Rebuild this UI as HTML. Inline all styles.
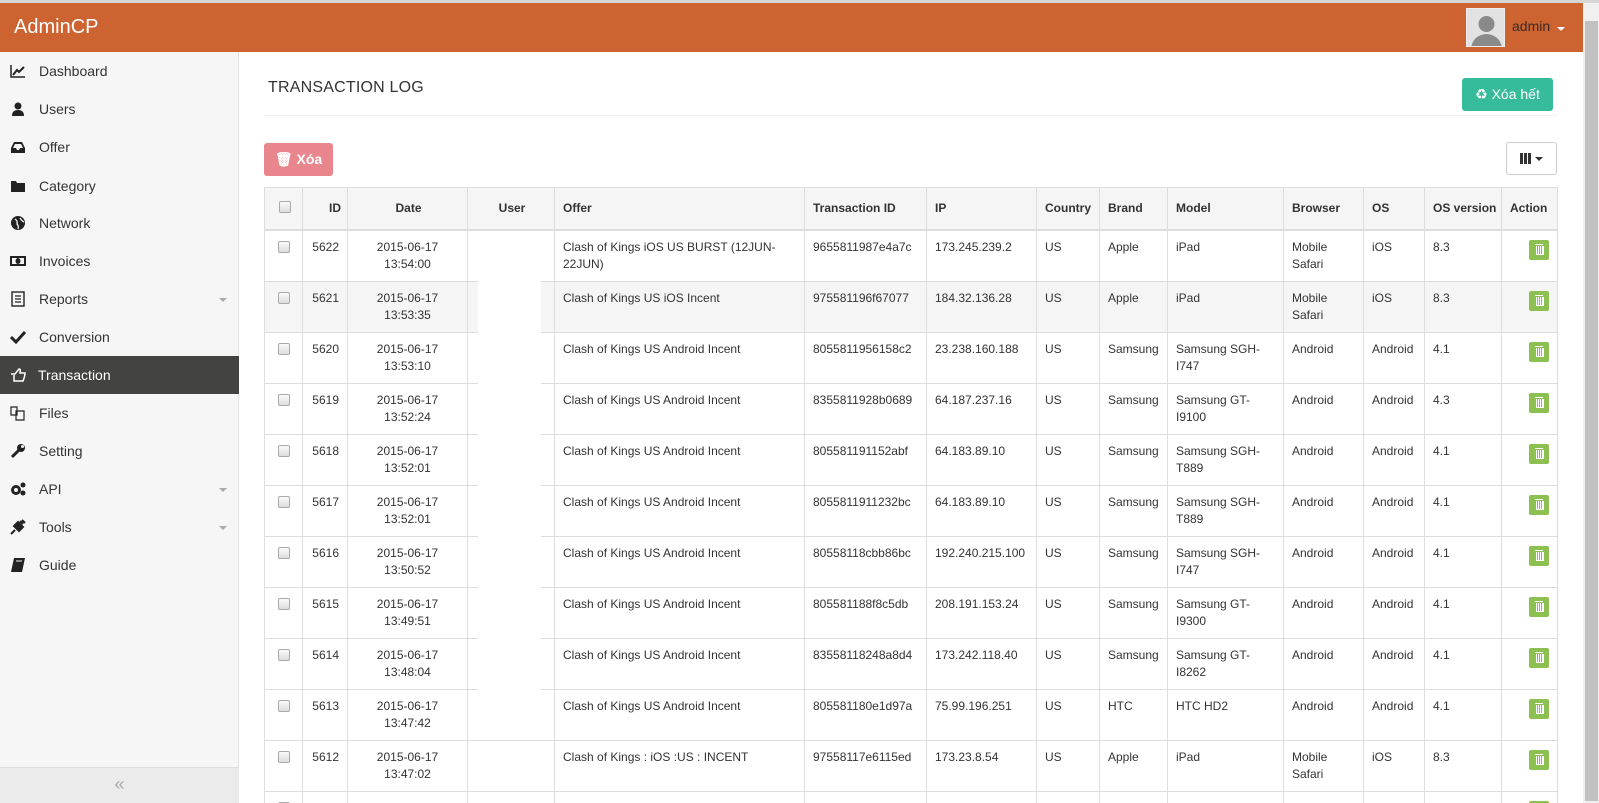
<!DOCTYPE html>
<html style="overflow:hidden"><head><meta charset="utf-8">
<style>
*{box-sizing:border-box;margin:0;padding:0}
body{width:1599px;height:803px;overflow:hidden;background:#fff;font-family:"Liberation Sans",Arial,sans-serif;color:#333;position:relative}
#chrome{position:absolute;left:0;top:0;width:1599px;height:3px;background:#d6d6d6}
#hdr{position:absolute;left:0;top:3px;width:1583px;height:49px;background:#cd6331}
#hdr .brand{position:absolute;left:14px;top:13px;color:#fff;font-size:20px}
#hdr .av{position:absolute;left:1466px;top:5px;width:39px;height:39px;background:#d9d9d9;border:1px solid #eee;overflow:hidden}
#hdr .user{position:absolute;left:1512px;top:15px;font-size:14px;color:#3a2a20}
#hdr .caret{position:absolute;left:1557px;top:24px;border-left:4px solid transparent;border-right:4px solid transparent;border-top:4px solid #fff}
#scroll{position:absolute;left:1583px;top:3px;width:16px;height:800px;background:#f0f0f0}
#scroll .th{position:absolute;left:2px;top:18px;width:13px;height:780px;background:#c1c1c1}
#side{position:absolute;left:0;top:52px;width:239px;height:751px;background:#f6f6f6;border-right:1px solid #e3e3e3}
.it{position:absolute;left:0;width:239px;height:38px;font-size:14px;line-height:38px;color:#333}
.it .ic{position:absolute;left:10px;top:11px;width:16px;height:16px}
.it span.t{position:absolute;left:39px}
.it .dd{position:absolute;left:219px;top:18px;border-left:4px solid transparent;border-right:4px solid transparent;border-top:4px solid #aaa}
.it.act{background:#434341;color:#fff}
#coll{position:absolute;left:0;top:715px;width:239px;height:36px;background:#ebebeb;border-top:1px solid #ddd;text-align:center;color:#aaa;font-size:18px;line-height:32px}
#title{position:absolute;left:268px;top:79px;font-size:16px;color:#333;letter-spacing:.2px}
#hr{position:absolute;left:264px;top:115px;width:1293px;height:1px;background:#eee}
.btn{position:absolute;border-radius:3px;color:#fff;font-size:14px;text-align:center}
#xh{left:1462px;top:78px;width:91px;height:33px;background:#37bc9b;line-height:33px}
#xo{left:264px;top:143px;width:69px;height:33px;background:#e9858d;line-height:33px;font-weight:bold}
#cb{left:1506px;top:142px;width:51px;height:33px;border:1px solid #ccc;background:#fff}
table{position:absolute;left:264px;top:187px;border-collapse:collapse;table-layout:fixed;width:1293px;font-size:12px}
td,th{border:1px solid #ddd;padding:8px 8px;vertical-align:top;line-height:17px;color:#333;overflow:hidden}
th{background:#f5f5f5;height:42px;vertical-align:middle;text-align:left;border-bottom:2px solid #ddd;padding:8px 6px 8px 8px;white-space:nowrap}
td{height:51px}
.c{text-align:center}.r{text-align:right}
.ck{display:inline-block;width:12px;height:12px;border:1px solid #aaa;border-radius:2px;background:linear-gradient(#fafafa,#ddd);margin-top:2px}
tr.hv td{background:#f5f5f5}
.del{display:inline-block;width:20px;height:20px;background:#8cc152;border-radius:2px;position:relative;margin-top:1px}
.del:before{content:"";position:absolute;left:7px;top:6px;width:6px;height:8px;border:1px solid #fff;border-top:none;background:repeating-linear-gradient(90deg,transparent 0 1px,#fff 1px 2px)}
.del:after{content:"";position:absolute;left:6px;top:4px;width:8px;height:1px;background:#fff}
#mask{position:absolute;left:478px;top:281px;width:63px;height:458px;background:#fff}
</style></head><body>
<div id="chrome"></div>
<div id="hdr"><div class="brand">AdminCP</div>
<div class="av"><svg width="39" height="39"><rect width="39" height="39" fill="#e2e2e2"/><circle cx="19.5" cy="15" r="8" fill="#8a8a8a"/><path d="M4 39 Q6 26 19.5 25 Q33 26 35 39Z" fill="#8a8a8a"/></svg></div>
<div class="user">admin</div><div class="caret"></div></div>
<div id="scroll"><div class="th"></div></div>
<div id="side">
<div class="it" style="top:0"><svg class="ic" viewBox="0 0 16 16"><path d="M1 2V14H15" stroke="#222" fill="none" stroke-width="1.5"/><path d="M3 12L7 7L9 9L14 4" stroke="#222" fill="none" stroke-width="2"/></svg><span class="t">Dashboard</span></div>
<div class="it" style="top:38px"><svg class="ic" viewBox="0 0 16 16"><circle cx="8" cy="5" r="3.5" fill="#222"/><path d="M2 15Q2 9 8 9Q14 9 14 15Z" fill="#222"/></svg><span class="t">Users</span></div>
<div class="it" style="top:76px"><svg class="ic" viewBox="0 0 16 16"><path d="M1 9L4 3H12L15 9V14H1Z" fill="#222"/><path d="M3 9H6L7 11H9L10 9H13L11 5H5Z" fill="#f6f6f6"/></svg><span class="t">Offer</span></div>
<div class="it" style="top:115px"><svg class="ic" viewBox="0 0 16 16"><path d="M1 3H6L7 5H15V14H1Z" fill="#222"/></svg><span class="t">Category</span></div>
<div class="it" style="top:152px"><svg class="ic" viewBox="0 0 16 16"><circle cx="8" cy="8" r="7" fill="#222"/><path d="M5 4Q8 6 7 9Q9 11 8 14M10 3Q12 6 14 7" stroke="#f6f6f6" fill="none" stroke-width="1.3"/></svg><span class="t">Network</span></div>
<div class="it" style="top:190px"><svg class="ic" viewBox="0 0 16 16"><rect x="0" y="3" width="16" height="10" fill="#222"/><rect x="2" y="5" width="12" height="6" fill="#f6f6f6"/><ellipse cx="8" cy="8" rx="2.5" ry="3" fill="#222"/></svg><span class="t">Invoices</span></div>
<div class="it" style="top:228px"><svg class="ic" viewBox="0 0 16 16"><rect x="2" y="1" width="12" height="14" fill="none" stroke="#222" stroke-width="1.4"/><path d="M5 5H11M5 8H11M5 11H11" stroke="#222" stroke-width="1.2"/></svg><span class="t">Reports</span><i class="dd"></i></div>
<div class="it" style="top:266px"><svg class="ic" viewBox="0 0 16 16"><path d="M1 8L6 13L15 3" stroke="#222" fill="none" stroke-width="3"/></svg><span class="t">Conversion</span></div>
<div class="it act" style="top:304px"><svg class="ic" viewBox="0 0 16 16"><path d="M1 7H5L9 2Q11 2 10 6H15Q15 9 13 14H4V8" stroke="#fff" fill="none" stroke-width="1.5"/></svg><span class="t" style="left:38px">Transaction</span></div>
<div class="it" style="top:342px"><svg class="ic" viewBox="0 0 16 16"><path d="M1 2H7V10H1Z M6 6H14V15H6Z" stroke="#222" fill="none" stroke-width="1.2"/></svg><span class="t">Files</span></div>
<div class="it" style="top:380px"><svg class="ic" viewBox="0 0 16 16"><path d="M2 14L9 7" stroke="#222" stroke-width="3"/><circle cx="11" cy="5" r="4" fill="#222"/><circle cx="12.5" cy="3.5" r="1.5" fill="#f6f6f6"/></svg><span class="t">Setting</span></div>
<div class="it" style="top:418px"><svg class="ic" viewBox="0 0 16 16"><circle cx="6" cy="9" r="5" fill="#222"/><circle cx="6" cy="9" r="2" fill="#f6f6f6"/><circle cx="13" cy="4" r="2.5" fill="#222"/><circle cx="13" cy="12" r="2.5" fill="#222"/></svg><span class="t">API</span><i class="dd"></i></div>
<div class="it" style="top:456px"><svg class="ic" viewBox="0 0 16 16"><path d="M1 15L5 11M4 7L9 12L13 8L8 3Z M10 2L13 5M12 1L15 4" stroke="#222" fill="#222" stroke-width="2"/></svg><span class="t">Tools</span><i class="dd"></i></div>
<div class="it" style="top:494px"><svg class="ic" viewBox="0 0 16 16"><path d="M4 1H15L12 15H1Z" fill="#222"/><path d="M6 4H12" stroke="#f6f6f6"/></svg><span class="t">Guide</span></div>
<div id="coll">«</div>
</div>
<div id="title">TRANSACTION LOG</div>
<div id="hr"></div>
<div class="btn" id="xh">♻ Xóa hết</div>
<div class="btn" id="xo">🗑 Xóa</div>
<div class="btn" id="cb"><svg width="51" height="31" style="position:absolute;left:0;top:0"><rect x="13" y="10" width="3" height="11" fill="#333"/><rect x="17" y="10" width="3" height="11" fill="#333"/><rect x="21" y="10" width="3" height="11" fill="#333"/><path d="M28 14L36 14L32 18Z" fill="#333"/></svg></div>
<table>
<colgroup><col style="width:38px"><col style="width:45px"><col style="width:120px"><col style="width:87px"><col style="width:250px"><col style="width:122px"><col style="width:110px"><col style="width:63px"><col style="width:68px"><col style="width:116px"><col style="width:80px"><col style="width:61px"><col style="width:77px"><col style="width:56px"></colgroup>
<tr><th class="c"><span class="ck"></span></th><th class="r">ID</th><th class="c">Date</th><th class="c">User</th><th>Offer</th><th>Transaction ID</th><th>IP</th><th>Country</th><th>Brand</th><th>Model</th><th>Browser</th><th>OS</th><th>OS version</th><th>Action</th></tr>
<tr><td class="c"><span class="ck"></span></td><td class="r">5622</td><td class="c">2015-06-17<br>13:54:00</td><td></td><td>Clash of Kings iOS US BURST (12JUN-22JUN)</td><td>9655811987e4a7c</td><td>173.245.239.2</td><td>US</td><td>Apple</td><td>iPad</td><td>Mobile Safari</td><td>iOS</td><td>8.3</td><td class="r"><span class="del"></span></td></tr>
<tr class="hv"><td class="c"><span class="ck"></span></td><td class="r">5621</td><td class="c">2015-06-17<br>13:53:35</td><td></td><td>Clash of Kings US iOS Incent</td><td>975581196f67077</td><td>184.32.136.28</td><td>US</td><td>Apple</td><td>iPad</td><td>Mobile Safari</td><td>iOS</td><td>8.3</td><td class="r"><span class="del"></span></td></tr>
<tr><td class="c"><span class="ck"></span></td><td class="r">5620</td><td class="c">2015-06-17<br>13:53:10</td><td></td><td>Clash of Kings US Android Incent</td><td>8055811956158c2</td><td>23.238.160.188</td><td>US</td><td>Samsung</td><td>Samsung SGH-I747</td><td>Android</td><td>Android</td><td>4.1</td><td class="r"><span class="del"></span></td></tr>
<tr><td class="c"><span class="ck"></span></td><td class="r">5619</td><td class="c">2015-06-17<br>13:52:24</td><td></td><td>Clash of Kings US Android Incent</td><td>8355811928b0689</td><td>64.187.237.16</td><td>US</td><td>Samsung</td><td>Samsung GT-I9100</td><td>Android</td><td>Android</td><td>4.3</td><td class="r"><span class="del"></span></td></tr>
<tr><td class="c"><span class="ck"></span></td><td class="r">5618</td><td class="c">2015-06-17<br>13:52:01</td><td></td><td>Clash of Kings US Android Incent</td><td>805581191152abf</td><td>64.183.89.10</td><td>US</td><td>Samsung</td><td>Samsung SGH-T889</td><td>Android</td><td>Android</td><td>4.1</td><td class="r"><span class="del"></span></td></tr>
<tr><td class="c"><span class="ck"></span></td><td class="r">5617</td><td class="c">2015-06-17<br>13:52:01</td><td></td><td>Clash of Kings US Android Incent</td><td>8055811911232bc</td><td>64.183.89.10</td><td>US</td><td>Samsung</td><td>Samsung SGH-T889</td><td>Android</td><td>Android</td><td>4.1</td><td class="r"><span class="del"></span></td></tr>
<tr><td class="c"><span class="ck"></span></td><td class="r">5616</td><td class="c">2015-06-17<br>13:50:52</td><td></td><td>Clash of Kings US Android Incent</td><td>80558118cbb86bc</td><td>192.240.215.100</td><td>US</td><td>Samsung</td><td>Samsung SGH-I747</td><td>Android</td><td>Android</td><td>4.1</td><td class="r"><span class="del"></span></td></tr>
<tr><td class="c"><span class="ck"></span></td><td class="r">5615</td><td class="c">2015-06-17<br>13:49:51</td><td></td><td>Clash of Kings US Android Incent</td><td>805581188f8c5db</td><td>208.191.153.24</td><td>US</td><td>Samsung</td><td>Samsung GT-I9300</td><td>Android</td><td>Android</td><td>4.1</td><td class="r"><span class="del"></span></td></tr>
<tr><td class="c"><span class="ck"></span></td><td class="r">5614</td><td class="c">2015-06-17<br>13:48:04</td><td></td><td>Clash of Kings US Android Incent</td><td>83558118248a8d4</td><td>173.242.118.40</td><td>US</td><td>Samsung</td><td>Samsung GT-I8262</td><td>Android</td><td>Android</td><td>4.1</td><td class="r"><span class="del"></span></td></tr>
<tr><td class="c"><span class="ck"></span></td><td class="r">5613</td><td class="c">2015-06-17<br>13:47:42</td><td></td><td>Clash of Kings US Android Incent</td><td>805581180e1d97a</td><td>75.99.196.251</td><td>US</td><td>HTC</td><td>HTC HD2</td><td>Android</td><td>Android</td><td>4.1</td><td class="r"><span class="del"></span></td></tr>
<tr><td class="c"><span class="ck"></span></td><td class="r">5612</td><td class="c">2015-06-17<br>13:47:02</td><td></td><td>Clash of Kings : iOS :US : INCENT</td><td>97558117e6115ed</td><td>173.23.8.54</td><td>US</td><td>Apple</td><td>iPad</td><td>Mobile Safari</td><td>iOS</td><td>8.3</td><td class="r"><span class="del"></span></td></tr>
<tr><td class="c"><span class="ck"></span></td><td class="r">5611</td><td class="c">2015-06-17<br>13:46:40</td><td>admin</td><td>Clash of Kings US Android Incent</td><td>80558117c848a1d</td><td>64.187.237.24</td><td>US</td><td>LG</td><td>Nexus 4</td><td>Android</td><td>Android</td><td>4.2</td><td class="r"><span class="del"></span></td></tr>
</table>
<div id="mask"></div>
</body></html>
